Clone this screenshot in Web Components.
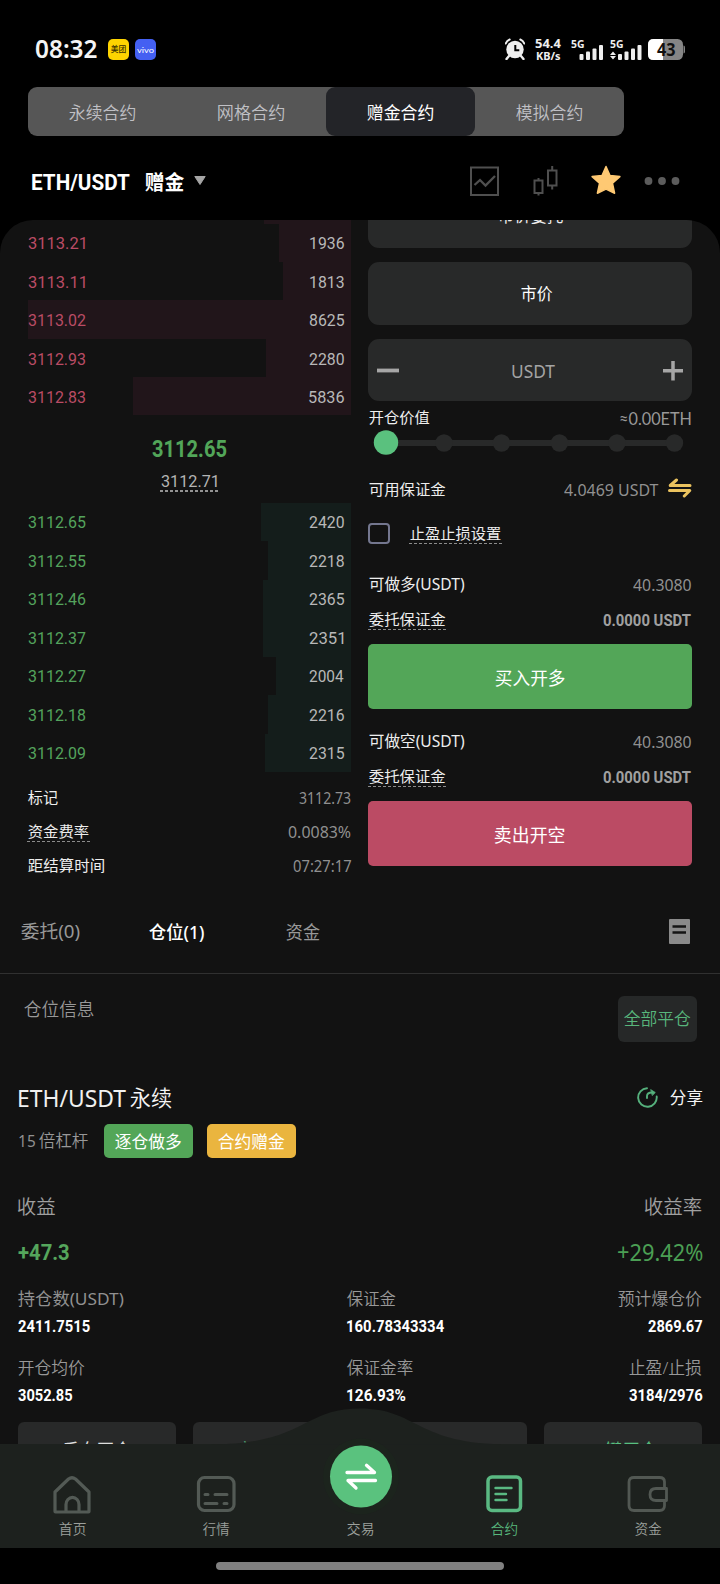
<!DOCTYPE html>
<html lang="zh-CN">
<head>
<meta charset="utf-8">
<title>ETH/USDT 赠金合约</title>
<style>
html,body{margin:0;padding:0;background:#000}
body{width:720px;height:1584px;overflow:hidden;color:#fff;font-family:"Noto Sans","Noto Sans CJK SC",sans-serif}
</style>
</head>
<body>
<trade-app></trade-app>
<script>
const FONTS = {
  sans: '"Noto Sans","Noto Sans CJK SC",sans-serif',
  lato: 'Lato,"Noto Sans CJK SC",sans-serif',
  din: 'Roboto,"Noto Sans CJK SC",sans-serif',
  cjk: '"Noto Sans CJK SC",sans-serif'
};
const ctx = document.createElement('canvas').getContext('2d');

/* A line of text whose visible glyphs fill the width "w" and are centred vertically in the box. */
class UiText extends HTMLElement {
  connectedCallback() {
    const w = +this.getAttribute('w'), size = +this.getAttribute('size');
    const weight = this.getAttribute('weight') || 400;
    const kind = this.getAttribute('font') || 'sans';
    const font = FONTS[kind];
    const line = this.getAttribute('line');
    const h = size < 13 ? 9 : 20;
    const cjk = /[\u4e00-\u9fff]/.test(this.textContent);
    const root = this.shadowRoot || this.attachShadow({mode: 'open'});
    root.innerHTML = `<style>
      :host{display:block;position:relative;flex:none;width:${w}px;height:${h}px;white-space:nowrap;font:${weight} ${size}px/${h}px ${font};font-kerning:normal}
      span{display:inline-block;transform-origin:0 0}
      i{display:inline-block;width:0;height:0}
      :host([line])::after{content:"";position:absolute;left:-1px;right:-1px;top:19.5px;height:${line === 'dot' ? 2 : 1}px;
        background:repeating-linear-gradient(90deg,currentColor 0 3px,transparent 3px 5px);opacity:${line === 'dot' ? .8 : .55}}
    </style><span><slot></slot><i></i></span>`;
    const span = root.querySelector('span'), mark = root.querySelector('i');
    ctx.font = `${weight} ${size}px ${font}`;
    const m = ctx.measureText(this.textContent);
    const ink = m.actualBoundingBoxLeft + m.actualBoundingBoxRight;
    const sx = w / ink;
    const base = mark.getBoundingClientRect().bottom - this.getBoundingClientRect().top;
    const mid = base - (m.actualBoundingBoxAscent - m.actualBoundingBoxDescent) / 2;
    const nx = cjk ? -.2 : 0, ny = cjk ? -.2 : 0;
    span.style.transform = `translate(${m.actualBoundingBoxLeft * sx + nx}px,${h / 2 - mid + ny}px) scaleX(${sx})`;
  }
}
customElements.define('ui-text', UiText);

const t = (text, w, size, color, weight = 400, font = 'sans', line = '') =>
  `<ui-text w="${w}" size="${size}" weight="${weight}" font="${font}" ${line ? `line="${line}"` : ''} style="color:${color}">${text}</ui-text>`;

const define = (name, css, html) => customElements.define(name, class extends HTMLElement {
  connectedCallback() {
    if (this.shadowRoot) return;
    const tpl = document.createElement('template');
    tpl.innerHTML = `<style>*{box-sizing:border-box}svg{display:block;flex:none}${css}</style>` + (typeof html === 'function' ? html(this) : html);
    this.attachShadow({mode: 'open'}).append(tpl.content.cloneNode(true));
  }
});

define('status-bar', `
  :host{display:flex;height:87px;padding:11px 35px 0 36px;align-items:center}
  .app{width:21px;height:21px;border-radius:5px;display:flex;align-items:center;justify-content:center}
  .a{background:#fed400;margin-left:10px}.b{background:#4460f2;margin-left:6.5px}
  .rate{margin-left:10px;width:26px;height:21px;display:flex;flex-direction:column;align-items:center;justify-content:space-between}
  .sig{position:relative;height:22px}
  .sig ui-text{position:absolute;left:0;top:.5px}
  .bat{width:37px;height:21px;margin-left:5px;position:relative}
  .bat ui-text{position:absolute;left:8.5px;top:.5px}
  .gap{flex:1}`, `
  ${t('08:32', 61.5, 24.5, '#f4f4f4', 600)}
  <div class="app a">${t('美团', 15, 7.5, '#3a3000', 500)}</div>
  <div class="app b">${t('vivo', 17, 7, '#fff', 400, 'lato')}</div>
  <div class="gap"></div>
  <svg width="20" height="22" viewBox="0 0 20 22"><circle cx="10" cy="11.5" r="8.7" fill="#eee"/><path d="M4 18l-2.500 3M16 18l2.500 3" stroke="#eee" stroke-width="2.400" stroke-linecap="round"/><path d="M.8 5.500Q1.800 2.700 4.700 1.500M19.200 5.500Q18.200 2.700 15.300 1.500" fill="none" stroke="#eee" stroke-width="2" stroke-linecap="round"/><path d="M10.300 7v5.200h4" fill="none" stroke="#000" stroke-width="2"/></svg>
  <div class="rate">${t('54.4', 26, 12, '#eee', 700)}${t('KB/s', 25, 11, '#eee', 700)}</div>
  <div class="sig" style="width:34px;margin-left:10px">${t('5G', 13.5, 11, '#eee', 700)}
    <svg width="34" height="22" fill="#eee"><rect x="8.500" y="16" width="4" height="6" rx="1"/><rect x="15" y="13.500" width="4" height="8.500" rx="1"/><rect x="21.500" y="10.500" width="4" height="11.500" rx="1"/><rect x="28" y="7" width="4" height="15" rx="1"/></svg></div>
  <div class="sig" style="width:33px;margin-left:5px">${t('5G', 13.5, 11, '#eee', 700)}
    <svg width="33" height="22" fill="#eee"><path d="M3 13.500l3 3.500H0zM3 21.500l3-3.500H0z"/><rect x="8" y="16" width="4" height="6" rx="1"/><rect x="14.500" y="13.500" width="4" height="8.500" rx="1"/><rect x="21" y="10.500" width="4" height="11.500" rx="1"/><rect x="27.500" y="7" width="4" height="15" rx="1"/></svg></div>
  <div class="bat"><svg width="37" height="21"><rect width="35" height="21" rx="5.500" fill="#858585"/><path d="M15 0v21H5.500Q0 21 0 15.500v-10Q0 0 5.500 0z" fill="#fff"/><path d="M35.500 6.500q1.500 0 1.500 2v4q0 2-1.500 2z" fill="#858585"/></svg>${t('43', 18.5, 17.5, '#111', 700)}</div>`);

define('contract-tabs', `
  :host{display:grid;grid-template-columns:repeat(4,149px);width:596px;height:49px;margin-left:28px;background:#565656;border-radius:9px}
  div{display:flex;align-items:center;justify-content:center;border-radius:9px;padding-top:2px}
  .on{background:#232428}`,
  ['永续合约', '网格合约', '赠金合约', '模拟合约'].map((s, i) => `<div class="${i == 2 ? 'on' : ''}">${t(s, 66.5, 17, i == 2 ? '#fff' : '#c0c0c5', i == 2 ? 400 : 350, 'cjk')}</div>`).join(''));

define('pair-header', `
  :host{display:flex;height:84px;padding:6px 40.5px 0 31.7px;align-items:center}
  .gap{flex:1}svg{margin-top:-1px}ui-text{top:.8px}`, `
  ${t('ETH/USDT', 98, 22, '#fff', 700, 'din')}<div style="width:15.300px"></div>
  ${t('赠金', 40, 20.5, '#fff', 700, 'cjk')}
  <svg style="margin-left:9px" width="12" height="9"><path d="M.8.500h10.400L6 8.500z" fill="#a5a5a5" stroke="#a5a5a5" stroke-linejoin="round"/></svg>
  <div class="gap"></div>
  <svg width="29" height="30" fill="none" stroke="#4f4f4f"><rect x="1" y="1.500" width="27" height="27.500" stroke-width="2"/><path d="M4.500 19L10 14l5.500 5.500L25 10" stroke-width="2.300"/></svg>
  <svg style="margin-left:33.500px" width="26" height="30" fill="none" stroke="#4f4f4f" stroke-width="2"><path d="M1.500 14.500h8V27h-8zM5.500 12v2.500M5.500 27v2.500M15 4.500h8.500v15H15zM19.200 0v4.500M19.200 19.500v4"/></svg>
  <svg style="margin-left:32px" width="30" height="31"><path d="M15 1.500l4 9.100 9.900 1-7.400 6.700 2.100 9.900L15 24.100 6.400 28.200l2.100-9.900L1.100 11.600l9.900-1z" fill="#fec973" stroke="#fec973" stroke-width="1.500" stroke-linejoin="round"/></svg>
  <svg style="margin-left:23px" width="36" height="10" fill="#5c5c5c"><circle cx="4.500" cy="5" r="3.900"/><circle cx="18" cy="5" r="3.900"/><circle cx="31.500" cy="5" r="3.900"/></svg>`);

define('book-row', `
  :host{display:flex;height:38.4px;width:323px;justify-content:flex-end;flex:none}
  .bar{flex:none;display:flex;align-items:center;justify-content:flex-end;padding-right:7px}
  .price{flex:1;width:0;display:flex;align-items:center;position:relative;z-index:1}
  ui-text{top:.7px}`, el => {
    const [p, q, x] = [el.getAttribute('price'), el.getAttribute('qty'), +el.getAttribute('bar')];
    const ask = el.getAttribute('side') === 'ask';
    return `<div class="price">${t(p, 57.5, 17, ask ? '#ba4c65' : '#54a35d', 400, 'din')}</div>
      <div class="bar" style="width:${351 - x}px;background:${ask ? '#21151a' : '#141d1b'}">${t(q, q[0] == '1' ? 34 : 35, 17, '#b8b8b8', 400, 'din')}</div>`;
  });

const row = (side, p, q, x) => `<book-row side="${side}" price="${p}" qty="${q}" bar="${x}"></book-row>`;
define('order-book', `
  :host{display:block;width:323px}
  .stub{height:3.5px;margin-left:236px;background:#21151a}
  .mid{height:87.1px;padding-top:23px;display:flex;flex-direction:column;align-items:center;gap:12.5px;padding-right:.5px}
  .info{height:34px;display:flex;justify-content:space-between;align-items:center;padding-right:.5px}
  .bids book-row{height:38.5px}`, `
  <div class="stub"></div>
  ${row('ask', '3113.21', '1936', 278.5)}${row('ask', '3113.11', '1813', 282.5)}${row('ask', '3113.02', '8625', 28)}${row('ask', '3112.93', '2280', 265.5)}${row('ask', '3112.83', '5836', 132.5)}
  <div class="mid">${t('3112.65', 74.5, 23.5, '#52a659', 700, 'din')}${t('3112.71', 56.5, 17, '#b4b4b4', 400, 'din', 'dot')}</div>
  <div class="bids">${row('bid', '3112.65', '2420', 260.5)}${row('bid', '3112.55', '2218', 268)}${row('bid', '3112.46', '2365', 262.5)}${row('bid', '3112.37', '2351', 263)}${row('bid', '3112.27', '2004', 276)}${row('bid', '3112.18', '2216', 268)}${row('bid', '3112.09', '2315', 264.5)}</div>
  <div style="height:8.500px"></div>
  <div class="info">${t('标记', 30, 15.3, '#eee', 400, 'cjk')}${t('3112.73', 51.5, 17, '#909090')}</div>
  <div class="info">${t('资金费率', 61, 15.3, '#eee', 400, 'cjk', 'dash')}${t('0.0083%', 63, 17, '#909090')}</div>
  <div class="info">${t('距结算时间', 76, 15.3, '#eee', 400, 'cjk')}${t('07:27:17', 58, 17, '#909090')}</div>`);

define('order-form', `
  :host{display:block;width:324px}
  .box{height:62.5px;border-radius:11px;background:#282929;margin-bottom:14.5px;display:flex;align-items:center;justify-content:center}
  .amt{justify-content:space-between;padding:2px 9px 0;margin-bottom:0;height:62px}
  .r{display:flex;align-items:center;justify-content:space-between;height:34px}
  .btn{height:65px;border-radius:5px;display:flex;align-items:center;justify-content:center;margin-top:7.5px;padding-top:2px}
  .r+.r{margin-top:1px}
  .slider{height:16px;margin-left:5px;display:block;overflow:visible}
  .cb{width:21.500px;height:21.500px;border:2px solid #74778f;border-radius:4px;margin-right:20px}`, `
  <div class="box" style="margin-top:-35px">${t('市价委托', 65, 16.5, '#eee', 400, 'cjk')}</div>
  <div class="box" style="padding:1px 0 0 14px">${t('市价', 32, 16.7, '#fff', 400, 'cjk')}</div>
  <div class="box amt"><svg width="22" height="20"><path d="M0 9.500h22" stroke="#a6a6a6" stroke-width="3.800"/></svg>
    <div style="margin-left:5px">${t('USDT', 43, 18, '#a4a4a4')}</div>
    <svg width="20" height="20"><path d="M0 9.800h20M10 0v19.500" stroke="#a6a6a6" stroke-width="3.500"/></svg></div>
  <div class="r" style="padding-right:1px;padding-left:1px;height:33.500px">${t('开仓价值', 60.5, 15.3, '#eee', 400, 'cjk')}${t('≈0.00ETH', 71, 17, '#989898', 400, 'lato')}</div>
  <svg class="slider" width="314" height="16" fill="#282929"><rect x="13" y="5" width="290" height="6"/><circle cx="71" cy="8" r="8.700"/><circle cx="128.500" cy="8" r="8.700"/><circle cx="186.500" cy="8" r="8.700"/><circle cx="244" cy="8" r="8.700"/><circle cx="301.500" cy="8" r="8.700"/><circle cx="13" cy="7.500" r="12.200" fill="#5ac17e"/></svg>
  <div class="r" style="margin-top:22.500px;padding-left:1px">${t('可用保证金', 76.5, 15.3, '#eee', 400, 'cjk')}<div style="flex:1"></div>${t('4.0469 USDT', 95, 17, '#909090')}
    <svg style="margin:-4px 0 0 9px" width="24" height="20" viewBox="0 0 24 20" fill="none" stroke="#ebc35f" stroke-width="3" stroke-linecap="round" stroke-linejoin="round"><path d="M22 7.500H2.200L8.500 2M1.500 12.500h20.300l-5.500 5.500"/></svg></div>
  <div style="display:flex;align-items:center;height:22px;margin-top:15.700px"><div class="cb"></div>${t('止盈止损设置', 91, 15.3, '#eee', 400, 'cjk', 'dash')}</div>
  <div class="r" style="margin-top:23.300px;padding:0 1px">${t('可做多(USDT)', 96, 16, '#eee', 400, 'sans')}${t('40.3080', 58, 17, '#909090')}</div>
  <div class="r" style="padding:0 1px">${t('委托保证金', 76.5, 15.3, '#eee', 400, 'cjk', 'dash')}${t('0.0000 USDT', 88, 16, '#a0a0a0', 700, 'din')}</div>
  <div class="btn" style="background:#53a658">${t('买入开多', 70, 17.7, '#fff', 400, 'cjk')}</div>
  <div class="r" style="margin-top:15.500px;padding:0 1px">${t('可做空(USDT)', 96, 16, '#eee', 400, 'sans')}${t('40.3080', 58, 17, '#909090')}</div>
  <div class="r" style="padding:0 1px">${t('委托保证金', 76.5, 15.3, '#eee', 400, 'cjk', 'dash')}${t('0.0000 USDT', 88, 16, '#a0a0a0', 700, 'din')}</div>
  <div class="btn" style="background:#bb4b64">${t('卖出开空', 70, 17.7, '#fff', 400, 'cjk')}</div>`);

define('position-tabs', `
  :host{display:flex;align-items:center;height:91px;padding:9px 30px 0 20.5px;border-bottom:1px solid #303030}
  svg{margin-top:-2px}`, `
  ${t('委托(0)', 59, 17.7, '#989898', 400)}<div style="width:69px"></div>
  ${t('仓位(1)', 55, 17.7, '#fff', 500)}<div style="width:82px"></div>
  ${t('资金', 34.5, 17.7, '#989898', 400, 'cjk')}<div style="flex:1"></div>
  <svg width="21" height="25"><rect width="21" height="25" rx="1" fill="#8a8a8a"/><path d="M3.500 7.500h13.500M3.500 13.500h13.500" stroke="#141414" stroke-width="2.700"/></svg>`);

define('position-card', `
  :host{display:block;padding:0 18px 0 17.5px}
  .top{display:flex;justify-content:space-between;align-items:flex-start;margin:22.5px 5px 0 6.5px}
  .top>ui-text{margin-top:2.500px}
  .close{width:79px;height:45.5px;border-radius:6px;background:#262828;display:flex;align-items:center;justify-content:center}
  .r{display:flex;align-items:center;justify-content:space-between}
  .tag{width:89px;height:34px;border-radius:5px;display:flex;align-items:center;justify-content:center;padding-top:2px}
  .g{display:grid;grid-template-columns:329.500px 1fr auto;align-items:center;height:26px}
  .acts{display:grid;grid-template-columns:repeat(4,158px);justify-content:space-between;margin-top:14.300px}
  .acts div{height:57px;border-radius:6px;background:#282929;display:flex;justify-content:center;align-items:center}`, `
  <div class="top">${t('仓位信息', 70, 17.7, '#989898', 350, 'cjk')}<div class="close">${t('全部平仓', 67, 17, '#58b67c', 350, 'cjk')}</div></div>
  <div class="r" style="height:40px;margin-top:36px"><div style="width:1.500px"></div>${t('ETH/USDT', 107.5, 24, '#f0f0f0', 400)}<div style="width:3px"></div>${t('永续', 42, 21.3, '#f4f4f4', 350, 'cjk')}<div style="flex:1"></div>
    <svg width="21" height="21" fill="none" stroke="#55b07c" stroke-width="1.900" stroke-linecap="round"><path d="M10 1.200a9.300 9.300 0 1 0 9.700 8.300M10 11V9q0-3.500 5-3.500"/><path d="M14 2.800L18.300 5.500 15.500 8.300z" fill="#55b07c" stroke-width=".8"/></svg>
    <div style="width:11.500px"></div>${t('分享', 32.5, 16.7, '#f4f4f4', 400, 'cjk')}</div>
  <div class="r" style="height:34px;margin-top:6px;justify-content:flex-start"><div style="width:1px"></div>${t('15', 16, 17, '#909090')}<div style="width:4px"></div>${t('倍杠杆', 49.5, 17, '#989898', 350, 'cjk')}
    <div class="tag" style="background:#53a658;margin-left:16px">${t('逐仓做多', 67, 17, '#fff', 400, 'cjk')}</div>
    <div class="tag" style="background:#eab53f;margin-left:14px">${t('合约赠金', 67, 17, '#fff', 400, 'cjk')}</div></div>
  <div class="r" style="height:30px;margin-top:34px">${t('收益', 37.500, 19.300, '#a0a0a0', 350, 'cjk')}${t('收益率', 57, 19.300, '#a0a0a0', 350, 'cjk')}</div>
  <div class="r" style="height:30px;margin-top:15.500px">${t('+47.3', 51, 22.3, '#55a65c', 700, 'din')}${t('+29.42%', 84.5, 24, '#4b9f54', 400)}</div>
  <div class="g" style="margin-top:18.500px">${t('持仓数(USDT)', 106, 17, '#909090', 400)}${t('保证金', 49, 17, '#989898', 350, 'cjk')}${t('预计爆仓价', 84, 17, '#989898', 350, 'cjk')}</div>
  <div class="g" style="margin-top:1px">${t('2411.7515', 72, 16, '#fff', 700, 'din')}${t('160.78343334', 97, 16, '#fff', 700, 'din')}${t('2869.67', 54.500, 16, '#fff', 700, 'din')}</div>
  <div class="g" style="margin-top:16px">${t('开仓均价', 67, 17, '#989898', 350, 'cjk')}${t('保证金率', 66.500, 17, '#989898', 350, 'cjk')}${t('止盈/止损', 73, 17, '#989898', 350)}</div>
  <div class="g" style="margin-top:1px">${t('3052.85', 54.500, 16, '#fff', 700, 'din')}${t('126.93%', 59, 16, '#fff', 700, 'din')}${t('3184/2976', 73.500, 16, '#fff', 700, 'din')}</div>
  <div class="acts"><div>${t('反向开仓', 70, 17.7, '#ddd', 400, 'cjk')}</div><div>${t('市价平仓', 70, 17.7, '#58b67c', 400, 'cjk')}</div><div></div><div>${t('一键平仓', 70, 17.7, '#58c080', 400, 'cjk')}</div></div>`);

define('bottom-nav', `
  :host{display:grid;grid-template-columns:repeat(5,144px);height:104.5px;background:#1d211e;position:relative}
  .bump{position:absolute;left:210px;top:-36px}
  .item{position:relative;display:flex;flex-direction:column;align-items:center;padding-top:30px;height:104px}
  .ic{height:40px;margin-bottom:5px;display:flex;align-items:center}
  .main{position:absolute;left:33px;top:-7px}`, `
  <svg class="bump" width="300" height="37"><path d="M0 36.500C95 36.500 92 .5 150 .5s55 36 150 36z" fill="#1d211e"/></svg>
  <div class="item"><div class="ic"><svg width="40" height="40" fill="none" stroke="#535a55" stroke-width="3.200" stroke-linejoin="round"><path d="M3 37.500V18L16.500 5q3.500-2.500 7 0L37 18v19.500q0 .5-.5.5h-33q-.5 0-.5-.5zM14 38v-7.500a6 6.500 0 0 1 13 0V38"/></svg></div>${t('首页', 27, 13.7, '#9ca09c', 350, 'cjk')}</div>
  <div class="item"><div class="ic"><svg width="40" height="40" fill="none" stroke="#535a55" stroke-width="3.200" stroke-linecap="round"><rect x="2.500" y="3.500" width="35.500" height="33" rx="6"/><path d="M9 20.500h3M19 20.500h12M9 29.500h12M28 29.500h3" stroke-width="3"/></svg></div>${t('行情', 27, 13.7, '#9ca09c', 350, 'cjk')}</div>
  <div class="item"><svg class="main" width="80" height="80"><circle cx="40" cy="39.500" r="38" fill="#1c241d"/><circle cx="40" cy="39.500" r="31" fill="#5ac27e"/><path d="M26 35.500h27.500L45.500 28.300M54.500 43.500H27l8 7.500" fill="none" stroke="#fff" stroke-width="3.300" stroke-linecap="round" stroke-linejoin="round"/></svg><div class="ic"></div>${t('交易', 27, 13.7, '#9ca09c', 350, 'cjk')}</div>
  <div class="item"><div class="ic"><svg width="40" height="40" fill="none" stroke="#5ab982" stroke-linecap="round"><rect x="4" y="3" width="32.500" height="33.500" rx="4" stroke-width="3.500"/><path d="M11.500 14h16M11.500 20h10.500M11.500 26h11" stroke-width="2.400"/></svg></div>${t('合约', 26.500, 13.7, '#58b87d', 350, 'cjk')}</div>
  <div class="item"><div class="ic"><svg width="42" height="40" fill="none" stroke="#525853" stroke-width="2.800" stroke-linejoin="round"><path d="M37.500 14.500V8q0-4.500-5-4.500H7Q2 3.500 2 8v23.500q0 5 5 5h25.500q5 0 5-5V27M39.500 14.500H29q-6 0-6 6t6 6h10.500z"/></svg></div>${t('资金', 27, 13.7, '#9ca09c', 350, 'cjk')}</div>`);

define('trade-app', `
  :host{display:flex;flex-direction:column;width:720px;height:1584px;background:#000}
  .scroll{flex:1;min-height:0;overflow:hidden;background:#121212;border-radius:33px 33px 0 0}
  .cols{display:grid;grid-template-columns:323px 324px;gap:17px;padding:0 28px}
  .foot{height:36px;flex:none;display:flex;justify-content:center;padding-top:14px}
  .foot div{width:288px;height:8px;border-radius:4px;background:#808080}`, `
  <status-bar></status-bar><contract-tabs></contract-tabs><pair-header></pair-header>
  <div class="scroll"><div class="cols"><order-book></order-book><order-form></order-form></div><position-tabs></position-tabs><position-card></position-card></div>
  <bottom-nav></bottom-nav><div class="foot"><div></div></div>`);
</script>
</body>
</html>
